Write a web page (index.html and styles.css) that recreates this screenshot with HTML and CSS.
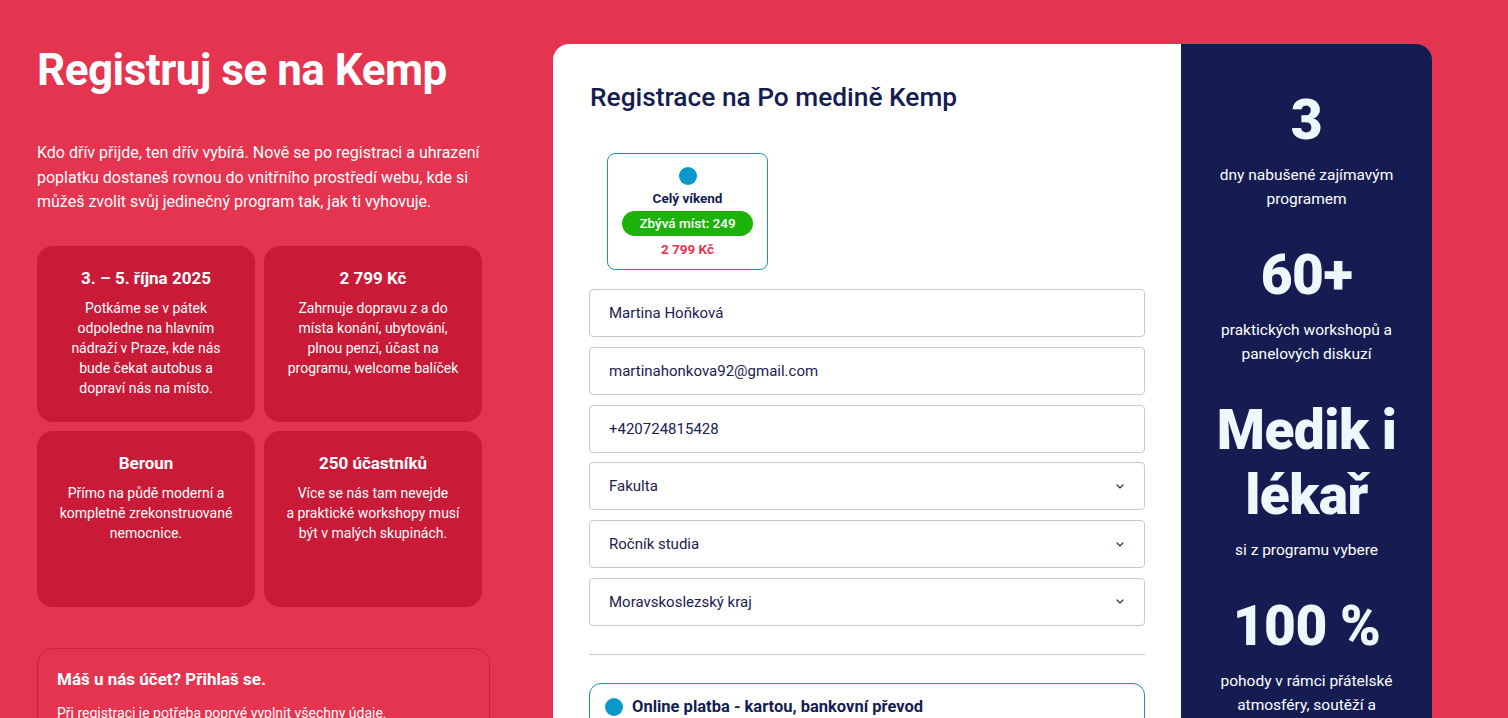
FILE: index.html
```html
<!DOCTYPE html>
<html lang="cs">
<head>
<meta charset="utf-8">
<title>Registruj se na Kemp</title>
<link rel="stylesheet" href="styles.css">
</head>
<body>
<div class="page">
  <section class="intro">
    <h1 class="intro-title">Registruj se na Kemp</h1>
    <p class="intro-text">Kdo dřív přijde, ten dřív vybírá. Nově se po registraci a uhrazení poplatku dostaneš rovnou do vnitřního prostředí webu, kde si můžeš zvolit svůj jedinečný program tak, jak ti vyhovuje.</p>
    <div class="facts">
      <div class="fact">
        <h3 class="fact-title">3. – 5. října 2025</h3>
        <p class="fact-text">Potkáme se v pátek<br>odpoledne na hlavním<br>nádraží v Praze, kde nás<br>bude čekat autobus a<br>dopraví nás na místo.</p>
      </div>
      <div class="fact">
        <h3 class="fact-title">2 799 Kč</h3>
        <p class="fact-text">Zahrnuje dopravu z a do<br>místa konání, ubytování,<br>plnou penzi, účast na<br>programu, welcome balíček</p>
      </div>
      <div class="fact">
        <h3 class="fact-title">Beroun</h3>
        <p class="fact-text">Přímo na půdě moderní a<br>kompletně zrekonstruované<br>nemocnice.</p>
      </div>
      <div class="fact">
        <h3 class="fact-title">250 účastníků</h3>
        <p class="fact-text">Více se nás tam nevejde<br>a praktické workshopy musí<br>být v malých skupinách.</p>
      </div>
    </div>
    <div class="login">
      <h3 class="login-title">Máš u nás účet? Přihlaš se.</h3>
      <p class="login-text">Při registraci je potřeba poprvé vyplnit všechny údaje.</p>
    </div>
  </section>

  <section class="panel">
    <div class="form-side">
      <h2 class="form-title">Registrace na Po medině Kemp</h2>
      <div class="ticket">
        <span class="dot"></span>
        <div class="ticket-name">Celý víkend</div>
        <div class="ticket-pill">Zbývá míst: 249</div>
        <div class="ticket-price">2 799 Kč</div>
      </div>
      <div class="fields">
        <div class="field">Martina Hoňková</div>
        <div class="field">martinahonkova92@gmail.com</div>
        <div class="field">+420724815428</div>
        <div class="field field-select">Fakulta<svg class="chev" viewBox="0 0 8 5" width="8" height="5"><path d="M0.7 0.7l3.3 3.3 3.3-3.3" fill="none" stroke="#1b2150" stroke-width="1.2"/></svg></div>
        <div class="field field-select">Ročník studia<svg class="chev" viewBox="0 0 8 5" width="8" height="5"><path d="M0.7 0.7l3.3 3.3 3.3-3.3" fill="none" stroke="#1b2150" stroke-width="1.2"/></svg></div>
        <div class="field field-select">Moravskoslezský kraj<svg class="chev" viewBox="0 0 8 5" width="8" height="5"><path d="M0.7 0.7l3.3 3.3 3.3-3.3" fill="none" stroke="#1b2150" stroke-width="1.2"/></svg></div>
      </div>
      <hr class="divider">
      <div class="payment">
        <span class="dot"></span>
        <span class="payment-label">Online platba - kartou, bankovní převod</span>
      </div>
    </div>
    <aside class="stats">
      <div class="stat">
        <div class="stat-num">3</div>
        <p class="stat-text">dny nabušené zajímavým<br>programem</p>
      </div>
      <div class="stat">
        <div class="stat-num">60+</div>
        <p class="stat-text">praktických workshopů a<br>panelových diskuzí</p>
      </div>
      <div class="stat">
        <div class="stat-num">Medik i<br>lékař</div>
        <p class="stat-text">si z programu vybere</p>
      </div>
      <div class="stat">
        <div class="stat-num">100 %</div>
        <p class="stat-text">pohody v rámci přátelské<br>atmosféry, soutěží a<br>zábavy</p>
      </div>
    </aside>
  </section>
</div>
</body>
</html>
```

FILE: styles.css
```css
* { box-sizing: border-box; }

html, body {
  margin: 0;
  padding: 0;
  background: #e5344f;
  font-family: Roboto, "Noto Sans", Arial, sans-serif;
  overflow: hidden;
}

.page {
  display: flex;
  align-items: flex-start;
  gap: 63px;
  padding: 0 0 0 37px;
  height: 718px;
}

/* ---------- left intro ---------- */
.intro {
  width: 453px;
  flex: none;
  color: #fff;
}

.intro-title {
  margin: 44px 0 0;
  font-size: 44px;
  line-height: 52px;
  font-weight: 700;
  letter-spacing: -0.5px;
}

.intro-text {
  margin: 45px 0 0;
  font-size: 16px;
  line-height: 24.5px;
  width: 445px;
}

.facts {
  margin-top: 31px;
  display: grid;
  grid-template-columns: 218px 218px;
  grid-auto-rows: 176px;
  gap: 9px;
}

.fact {
  background: #c91a37;
  border-radius: 16px;
  padding: 22px 14px 0;
  text-align: center;
}

.fact-title {
  margin: 0;
  font-size: 17px;
  line-height: 20px;
  font-weight: 700;
}

.fact-text {
  margin: 10px 0 0;
  font-size: 14px;
  line-height: 20px;
  white-space: nowrap;
}

.login {
  margin-top: 41px;
  border: 1px solid #c9233f;
  border-radius: 16px;
  padding: 20px 19px 20px;
}

.login-title {
  margin: 0;
  font-size: 17px;
  line-height: 20px;
  font-weight: 700;
}

.login-text {
  margin: 14px 0 0;
  font-size: 14px;
  line-height: 20px;
}

/* ---------- right panel ---------- */
.panel {
  margin-top: 44px;
  width: 879px;
  flex: none;
  display: flex;
  border-radius: 16px 16px 0 0;
  overflow: hidden;
  min-height: 700px;
}

.form-side {
  width: 628px;
  flex: none;
  background: #fff;
  padding: 37px 36px 0 36px;
  color: #141c52;
}

.form-title {
  margin: 0 0 0 1px;
  font-size: 26.3px;
  line-height: 32px;
  font-weight: 500;
}

.ticket {
  margin: 40px 0 0 18px;
  width: 161px;
  height: 117px;
  border: 1px solid #1f93ae;
  border-radius: 8px;
  padding: 13px 14px 0;
  display: flex;
  flex-direction: column;
  align-items: center;
}

.dot {
  display: block;
  width: 18px;
  height: 18px;
  border-radius: 50%;
  background: #0a97c9;
  flex: none;
}

.ticket-name {
  margin-top: 4px;
  font-size: 13.5px;
  line-height: 18px;
  font-weight: 700;
}

.ticket-pill {
  margin-top: 4px;
  width: 131px;
  height: 25px;
  border-radius: 13px;
  background: #1db20a;
  color: #fff;
  font-size: 13.5px;
  font-weight: 500;
  line-height: 25px;
  text-align: center;
}

.ticket-price {
  margin-top: 3px;
  font-size: 13.5px;
  line-height: 20px;
  font-weight: 700;
  color: #e5344f;
}

.fields {
  margin-top: 19px;
  display: flex;
  flex-direction: column;
  gap: 9.8px;
}

.field {
  height: 48px;
  border: 1px solid #c6c8d4;
  border-radius: 4px;
  padding: 0 19px;
  display: flex;
  align-items: center;
  font-size: 15px;
  color: #1b2150;
}

.field-select {
  justify-content: space-between;
  padding-right: 20px;
}

.chev { display: block; }

.divider {
  margin: 28px 0 0;
  border: 0;
  border-top: 1px solid #c6c8d4;
  height: 0;
}

.payment {
  margin-top: 28px;
  border: 1px solid #1f93ae;
  border-radius: 12px;
  height: 60px;
  padding: 14px 15px 0;
  display: flex;
  align-items: flex-start;
  gap: 9px;
}

.payment-label {
  font-size: 16.5px;
  line-height: 18px;
  font-weight: 700;
  color: #141c52;
}

.stats {
  flex: 1;
  background: #141c52;
  color: #fff;
  text-align: center;
  padding: 44px 0 0;
}

.stat { margin-bottom: 32px; }

.stat-num {
  font-size: 55px;
  line-height: 65px;
  font-weight: 900;
  color: #eef8fc;
  letter-spacing: -0.5px;
}

.stat-text {
  margin: 10px 0 0;
  font-size: 15.5px;
  line-height: 24px;
}
```
